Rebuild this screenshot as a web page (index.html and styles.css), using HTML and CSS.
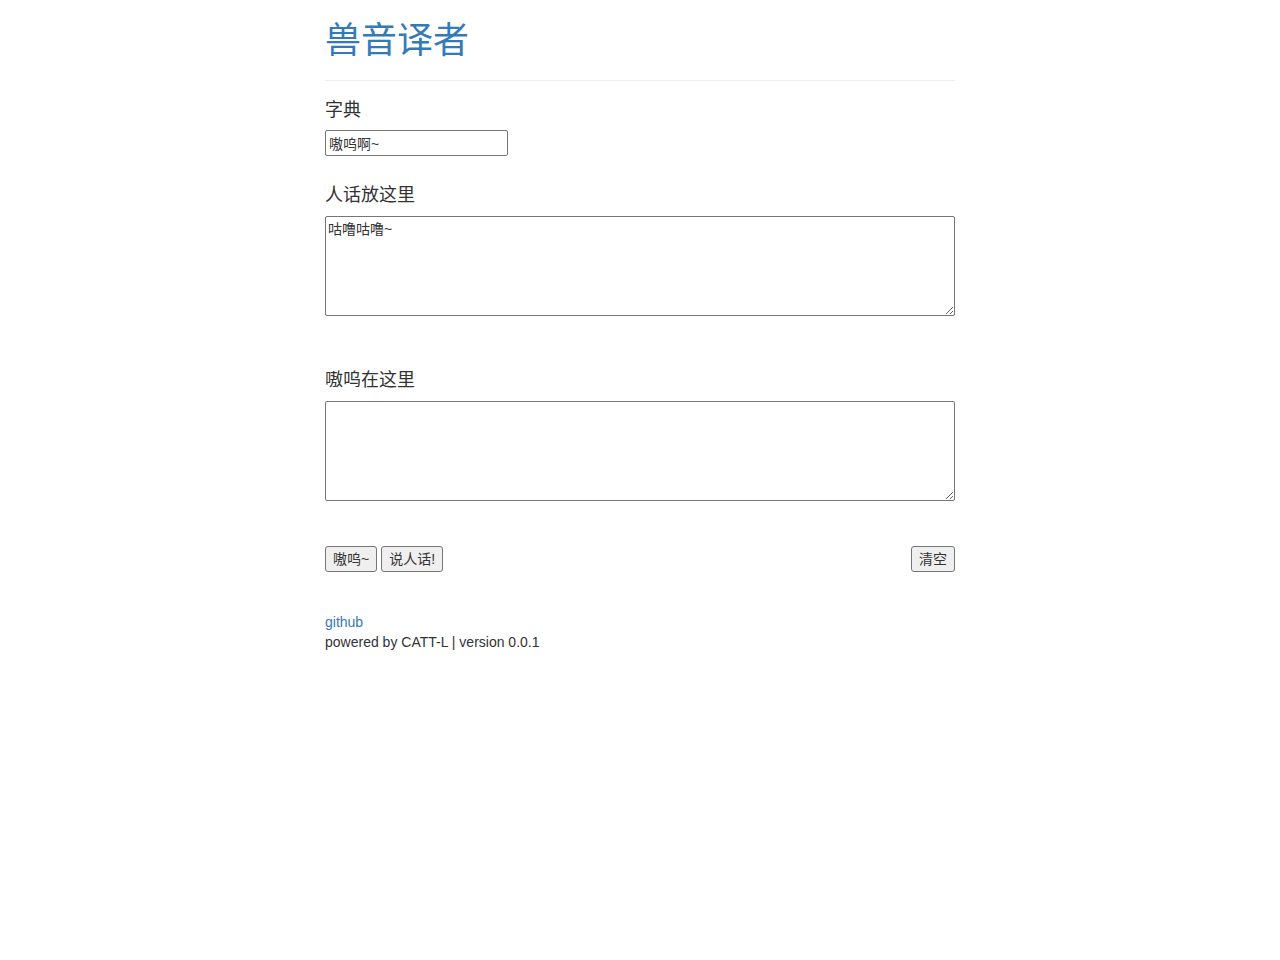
FILE: index.html
```html
<!DOCTYPE html>
<html lang="zh-CN">
<head>
    <meta charset="UTF-8">
    <title>兽音译者</title>
    <link rel="stylesheet" href="styles.css">
</head>
<body>
    <div class="container">
        <div class="page-header">
            <h1>兽音译者</h1>
        </div>

        <div class="form-group">
            <h4>字典</h4>
            <input type="text" id="dict" class="dict-input" value="嗷呜啊~">
        </div>

        <div class="form-group">
            <h4>人话放这里</h4>
            <textarea id="human">咕噜咕噜~</textarea>
        </div>

        <div class="form-group result">
            <h4>嗷呜在这里</h4>
            <textarea id="beast"></textarea>
        </div>

        <div class="actions">
            <div class="left">
                <button>嗷呜~</button>
                <button>说人话!</button>
            </div>
            <button>清空</button>
        </div>

        <div class="footer">
            <a href="#">github</a>
            <p>powered by CATT-L | version 0.0.1</p>
        </div>
    </div>
</body>
</html>
```

FILE: styles.css
```css
* {
    box-sizing: border-box;
}

body {
    margin: 0;
    font-family: "Liberation Sans", "Noto Sans CJK SC", sans-serif;
    font-size: 14px;
    line-height: 20px;
    color: #333;
    background: #fff;
}

.container {
    width: 630px;
    margin: 0 auto;
}

/* Header */
.page-header {
    padding: 21px 0 19px;
    border-bottom: 1px solid #eee;
}

.page-header h1 {
    margin: 0;
    font-size: 36px;
    line-height: 40px;
    font-weight: 400;
    color: #337ab7;
}

h4 {
    margin: 0 0 10px;
    font-size: 18px;
    line-height: 20px;
    font-weight: 400;
}

.form-group {
    margin-top: 19px;
}

.form-group + .form-group {
    margin-top: 29px;
}

.form-group.result {
    margin-top: 54px;
}

input, textarea, button {
    font-family: inherit;
    color: #333;
}

.dict-input {
    display: block;
    width: 183px;
    height: 26px;
    padding: 1px 3px;
    font-size: 14px;
    border: 1px solid #767676;
    border-radius: 2px;
}

textarea {
    display: block;
    width: 100%;
    height: 100px;
    padding: 4px 2px 2px;
    font-size: 14px;
    line-height: 17px;
    border: 1px solid #767676;
    border-radius: 2px;
}

h4 + textarea {
    margin-top: 11px;
}

/* Buttons */
.actions {
    display: flex;
    justify-content: space-between;
    margin-top: 45px;
}

.actions .left {
    display: flex;
    gap: 4px;
}

button {
    height: 26px;
    padding: 1px 7px;
    font-size: 14px;
    line-height: 20px;
    background: #efefef;
    border: 1px solid #767676;
    border-radius: 3px;
}

/* Footer */
.footer {
    margin-top: 40px;
}

.footer a {
    color: #337ab7;
    text-decoration: none;
}

.footer p {
    margin: 0;
}
```
